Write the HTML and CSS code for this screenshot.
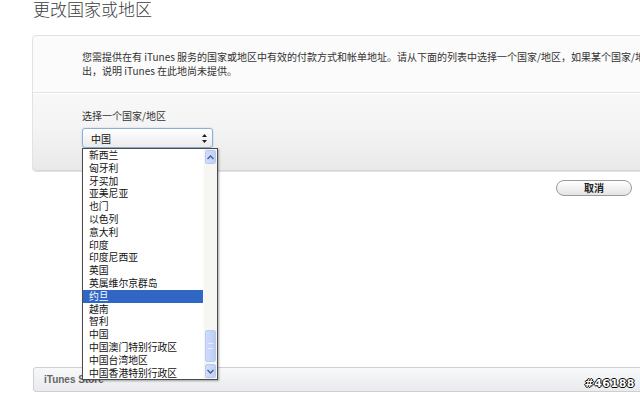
FILE: index.html
```html
<!DOCTYPE html>
<html lang="zh-CN">
<head>
  <meta charset="UTF-8">
  <title>更改国家或地区</title>
  <link rel="stylesheet" href="styles.css">
</head>
<body>
  <div class="page">
    <h1 class="title">更改国家或地区</h1>

    <!-- Main panel -->
    <div class="panel">
      <div class="panel-intro">
        <p>您需提供在有 iTunes 服务的国家或地区中有效的付款方式和帐单地址。请从下面的列表中选择一个国家/地区，如果某个国家/地区未列<br>出，说明 iTunes 在此地尚未提供。</p>
      </div>
      <div class="panel-form">
        <div class="field-label">选择一个国家/地区</div>
        <div class="select-wrap">
          <div class="select">
            <span>中国</span>
            <svg class="select-arrows" width="5" height="9" viewBox="0 0 5 9">
              <path d="M2.5 0 L5 3 L0 3 Z M2.5 9 L5 6 L0 6 Z" fill="#222"/>
            </svg>
          </div>

          <!-- Open dropdown list -->
          <div class="dropdown">
            <ul class="options">
              <li>新西兰</li>
              <li>匈牙利</li>
              <li>牙买加</li>
              <li>亚美尼亚</li>
              <li>也门</li>
              <li>以色列</li>
              <li>意大利</li>
              <li>印度</li>
              <li>印度尼西亚</li>
              <li>英国</li>
              <li>英属维尔京群岛</li>
              <li class="selected">约旦</li>
              <li>越南</li>
              <li>智利</li>
              <li>中国</li>
              <li>中国澳门特别行政区</li>
              <li>中国台湾地区</li>
              <li>中国香港特别行政区</li>
            </ul>
            <div class="scrollbar">
              <div class="scroll-btn">
                <svg width="7" height="5" viewBox="0 0 7 5"><polyline points="0.5,4 3.5,1 6.5,4" fill="none" stroke="#4a5f8c" stroke-width="1.4"/></svg>
              </div>
              <div class="scroll-track">
                <div class="scroll-thumb"><span class="grip"></span></div>
              </div>
              <div class="scroll-btn">
                <svg width="7" height="5" viewBox="0 0 7 5"><polyline points="0.5,1 3.5,4 6.5,1" fill="none" stroke="#4a5f8c" stroke-width="1.4"/></svg>
              </div>
            </div>
          </div>
        </div>
      </div>
    </div>

    <div class="actions">
      <button class="btn-cancel">取消</button>
    </div>

    <div class="footer">
      <span>iTunes Store</span>
    </div>
  </div>

  <div class="watermark">#46188</div>
</body>
</html>
```

FILE: styles.css
```css
body {
  margin: 0;
  padding: 0;
  background: #fff;
  overflow: hidden;
  height: 393px;
  font-family: "Noto Sans CJK SC", "Liberation Sans", sans-serif;
  color: #333;
}

.page {
  width: 640px;
  position: relative;
}

/* Title */
.title {
  margin: 0 0 0 33px;
  height: 35px;
  font-size: 17px;
  line-height: 17px;
  font-weight: 300;
  color: #3c3c3c;
}

/* Panel */
.panel {
  margin-left: 32px;
  margin-right: -60px;
  border: 1px solid #e2e2e2;
  border-radius: 4px;
  background: #fbfbfb;
}

.panel-intro {
  padding: 14px 0 14px 49px;
  border-bottom: 1px solid #e3e3e3;
}

.panel-intro p {
  margin: 0;
  font-size: 10px;
  line-height: 14px;
  color: #333;
  white-space: nowrap;
}

.panel-form {
  padding: 15px 0 22px 49px;
  border-top: 1px solid #fff;
  border-radius: 0 0 4px 4px;
  background: linear-gradient(#f8f8f8 0%, #f4f4f4 45%, #e9e9e9 100%);
  border-bottom: 1px solid #d6d6d6;
}

.field-label {
  font-size: 10px;
  line-height: 14px;
  color: #333;
}

/* Select */
.select-wrap {
  position: relative;
  width: 131px;
  margin-top: 5px;
}

.select {
  display: flex;
  align-items: center;
  justify-content: space-between;
  height: 18px;
  padding: 0 5px 0 8px;
  border: 1px solid #8eaed4;
  border-radius: 3px;
  background: linear-gradient(#ffffff, #ebebeb);
  box-shadow: 0 0 2px #b5cbe6;
  font-size: 10px;
  color: #111;
}

.select-arrows {
  display: block;
}

/* Dropdown */
.dropdown {
  position: absolute;
  top: 20px;
  left: 0;
  width: 134px;
  height: 230px;
  display: flex;
  border: 1px solid #4b4b4b;
  background: #fff;
  box-shadow: 1px 1px 2px rgba(0, 0, 0, 0.35);
  z-index: 5;
}

.options {
  list-style: none;
  margin: 0;
  padding: 0;
  flex: 1;
}

.options li {
  height: 12.8px;
  line-height: 12.8px;
  padding-left: 6px;
  font-size: 9.8px;
  color: #111;
  white-space: nowrap;
}

.options li.selected {
  background: #3167c4;
  color: #fff;
}

.scrollbar {
  width: 13px;
  display: flex;
  flex-direction: column;
  background: #f6f6f2;
  border-left: 1px solid #fbfbf9;
}

.scroll-btn {
  height: 12px;
  margin: 1px;
  display: flex;
  align-items: center;
  justify-content: center;
  border: 1px solid #b7c9ee;
  border-radius: 2px;
  background: linear-gradient(90deg, #d2defa, #bfd0f6);
}

.scroll-track {
  flex: 1;
  display: flex;
  flex-direction: column;
  justify-content: flex-end;
}

.scroll-thumb {
  height: 30px;
  margin: 0 1px 1px;
  border: 1px solid #b9cbf0;
  border-radius: 2px;
  background: linear-gradient(90deg, #cfdcfa, #bccdf5);
  display: flex;
  align-items: center;
  justify-content: center;
}

.grip {
  width: 5px;
  height: 4px;
  border-top: 1px solid #e6eeff;
  border-bottom: 1px solid #e6eeff;
}

/* Cancel button */
.actions {
  display: flex;
  justify-content: flex-end;
  padding: 8px 8px 0 0;
}

.btn-cancel {
  width: 76px;
  height: 16px;
  padding: 0;
  border: 1px solid #9a9a9a;
  border-radius: 8px;
  background: linear-gradient(#ffffff, #e4e4e4);
  font-family: "Noto Sans CJK SC", sans-serif;
  font-size: 10px;
  font-weight: bold;
  line-height: 14px;
  color: #222;
}

/* Footer */
.footer {
  margin: 171px -60px 0 33px;
  height: 23px;
  padding-left: 10px;
  display: flex;
  align-items: center;
  border: 1px solid #cfcfcf;
  border-radius: 3px;
  background: linear-gradient(#f7f8fa, #e9ebee);
}

.footer span {
  font-family: "Liberation Sans", sans-serif;
  font-size: 10px;
  font-weight: bold;
  color: #666;
}

/* Watermark */
.watermark {
  position: absolute;
  right: 5px;
  bottom: 3px;
  font-family: "DejaVu Sans", sans-serif;
  font-size: 11px;
  font-weight: bold;
  color: #fff;
  text-shadow: 1px 0 0 #000, -1px 0 0 #000, 0 1px 0 #000, 0 -1px 0 #000;
  letter-spacing: 0.5px;
}
```
